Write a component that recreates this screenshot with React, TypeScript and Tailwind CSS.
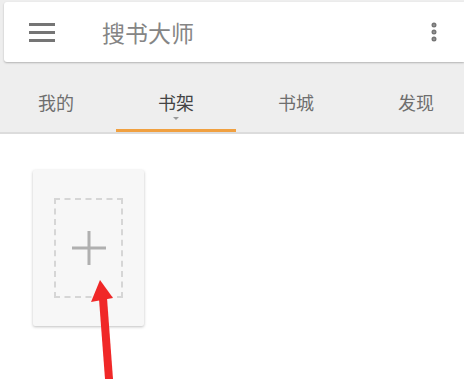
import { MoreVertical } from 'lucide-react';

const tabs = ['我的', '书架', '书城', '发现'];

export default function App() {
  return (
    <div
      className="relative w-[464px] h-[379px] overflow-hidden bg-white"
      style={{ fontFamily: '"Noto Sans CJK SC", "Noto Sans", sans-serif' }}
    >
      {/* top area */}
      <div className="bg-[#eeeeee] pt-[2px] pl-[4px] overflow-hidden">
        <div className="h-[60px] bg-white rounded-l-[3px] shadow-[0_1px_2px_rgba(0,0,0,0.25)] flex items-center">
          <div className="ml-[25px] w-[26px] flex flex-col gap-[5px]">
            <span className="h-[3px] bg-[#757575]" />
            <span className="h-[3px] bg-[#757575]" />
            <span className="h-[3px] bg-[#757575]" />
          </div>
          <span className="ml-[47px] text-[23px] text-[#858585] leading-none">搜书大师</span>
          <MoreVertical size={24} strokeWidth={3} className="ml-auto mr-[18px] text-[#757575]" />
        </div>
        <div className="-ml-[8px] mt-[6px] h-[66px] flex border-b-[2px] border-[#dcdcdc]">
          {tabs.map((t, i) => (
            <div key={t} className="relative shrink-0 w-[120px] flex flex-col items-center pt-[20px]">
              <span className={`text-[18px] leading-[28px] ${i === 1 ? 'text-[#444]' : 'text-[#6e6e6e]'}`}>{t}</span>
              {i === 1 && (
                <>
                  <span className="mt-[1px] w-0 h-0 border-l-[3px] border-r-[3px] border-t-[3px] border-l-transparent border-r-transparent border-t-[#999]" />
                  <span className="absolute bottom-0 left-0 right-0 h-[3px] bg-[#f0a040]" />
                </>
              )}
            </div>
          ))}
        </div>
      </div>

      {/* shelf */}
      <div className="pt-[36px] pl-[33px]">
        <div className="w-[111px] h-[156px] bg-[#f7f7f7] rounded-[2px] shadow-[0_1px_3px_rgba(0,0,0,0.25)] pt-[28px] pl-[21px]">
          <div className="w-[69px] h-[100px] border-[2px] border-dashed border-[#d6d6d6] flex items-center justify-center">
            <svg width="36" height="36" viewBox="0 0 36 36">
              <path d="M18 1v34M1 18h34" stroke="#b0b0b0" strokeWidth="3" />
            </svg>
          </div>
        </div>
      </div>

      {/* red arrow */}
      <svg className="absolute left-0 top-0" width="464" height="379" viewBox="0 0 464 379">
        <polygon points="100,280 91,302 113,298" fill="#f02828" />
        <polygon points="99,299 107,298 113,379 105,379" fill="#f02828" />
      </svg>
    </div>
  );
}
